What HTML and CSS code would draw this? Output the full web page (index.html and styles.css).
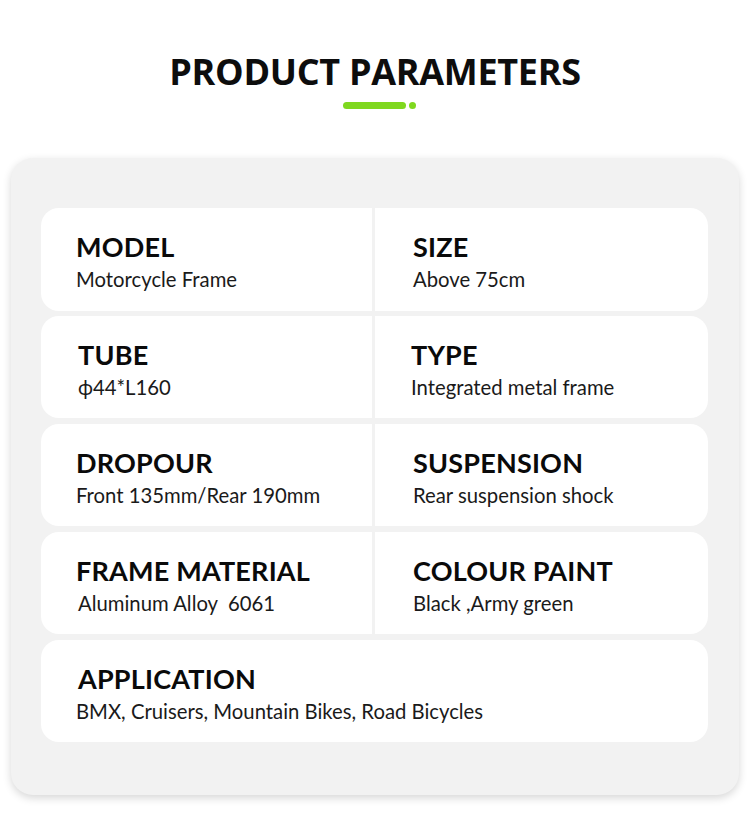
FILE: index.html
```html
<!DOCTYPE html>
<html>
<head>
<meta charset="utf-8">
<link rel="stylesheet" href="styles.css">
</head>
<body>
<div class="page">
  <header class="head">
    <h1 class="title">PRODUCT PARAMETERS</h1>
    <div class="accent"><span class="bar"></span><span class="dot"></span></div>
  </header>
  <section class="panel">
    <div class="row">
      <div class="cell left"><div class="label">MODEL</div><div class="value">Motorcycle Frame</div></div>
      <div class="cell right"><div class="label">SIZE</div><div class="value">Above 75cm</div></div>
    </div>
    <div class="row">
      <div class="cell left shift"><div class="label">TUBE</div><div class="value">ϕ44*L160</div></div>
      <div class="cell right tight"><div class="label">TYPE</div><div class="value">Integrated metal frame</div></div>
    </div>
    <div class="row">
      <div class="cell left"><div class="label">DROPOUR</div><div class="value">Front 135mm/Rear 190mm</div></div>
      <div class="cell right"><div class="label">SUSPENSION</div><div class="value">Rear suspension shock</div></div>
    </div>
    <div class="row">
      <div class="cell left"><div class="label">FRAME MATERIAL</div><div class="value indent">Aluminum Alloy&nbsp; 6061</div></div>
      <div class="cell right"><div class="label">COLOUR PAINT</div><div class="value">Black ,Army green</div></div>
    </div>
    <div class="row single">
      <div class="cell full"><div class="label">APPLICATION</div><div class="value outdent">BMX, Cruisers, Mountain Bikes, Road Bicycles</div></div>
    </div>
  </section>
</div>
</body>
</html>
```
FILE: styles.css
```css
* { box-sizing: border-box; }
html, body { margin: 0; padding: 0; background: #ffffff; }
body { font-family: "Lato", "Noto Sans", sans-serif; color: #111; }
.page { width: 750px; height: 832px; padding-top: 50px; }
.head { display: flex; flex-direction: column; align-items: center; }
.title {
  margin: 0;
  font-family: "Open Sans", "Noto Sans", sans-serif;
  font-weight: 700;
  font-size: 36px;
  line-height: 44px;
  color: #0d0d0d;
  letter-spacing: -0.3px;
}
.accent { display: flex; align-items: center; gap: 3px; margin-top: 8px; margin-left: 8px; }
.bar { width: 63px; height: 7px; border-radius: 4px; background: #7fd81f; }
.dot { width: 7px; height: 7px; border-radius: 50%; background: #7fd81f; }
.panel {
  margin: 49px 0 0 11px;
  width: 728px;
  height: 637px;
  background: #f2f2f2;
  border-radius: 22px;
  box-shadow: 0 3px 9px rgba(0,0,0,0.16);
  padding: 50px 31px 0 30px;
  display: flex;
  flex-direction: column;
  gap: 5.4px;
}
.row {
  height: 102.5px;
  display: grid;
  grid-template-columns: 331px 1fr;
  column-gap: 3px;
}
.row.single { grid-template-columns: 1fr; }
.cell { background: #fff; padding: 23px 0 0 35px; }
.left { border-radius: 18px 0 0 18px; }
.right { border-radius: 0 18px 18px 0; padding-left: 38px; }
.full { border-radius: 18px; padding-left: 37px; }
.shift { padding-left: 37px; }
.tight { padding-left: 36px; }
.label { font-weight: 700; font-size: 27px; line-height: 32px; letter-spacing: 0.2px; color: #0a0a0a; }
.value { font-size: 20.3px; line-height: 26px; margin-top: 3px; color: #1a1a1a; }
.indent { padding-left: 2px; }
.outdent { margin-left: -2px; }
```
